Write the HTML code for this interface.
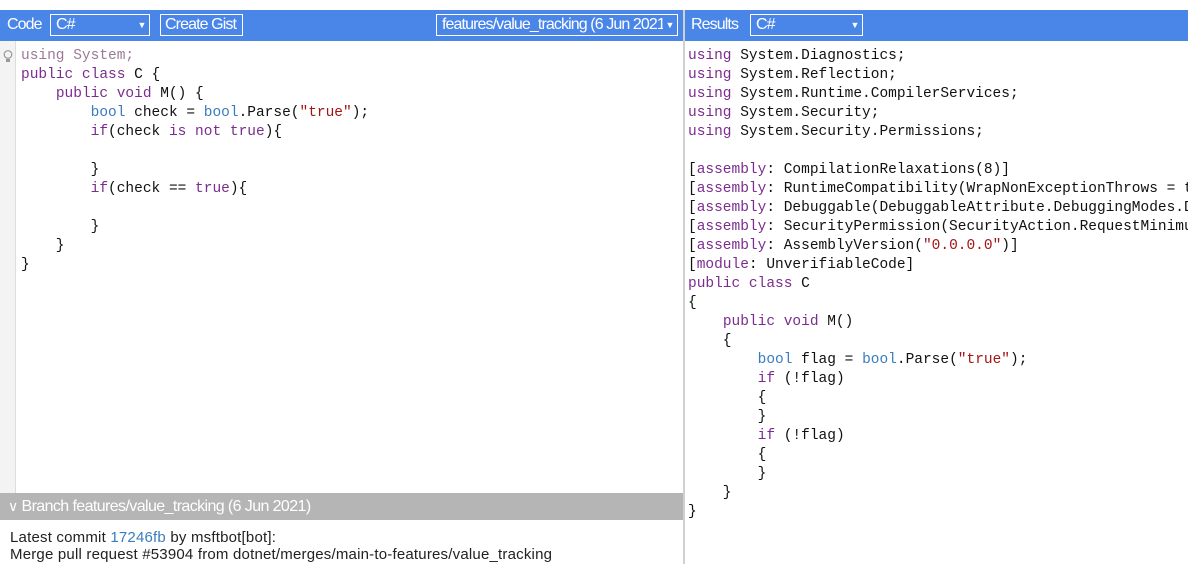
<!DOCTYPE html>
<html><head><meta charset="utf-8"><style>
*{margin:0;padding:0;box-sizing:border-box}
body{width:1188px;height:564px;overflow:hidden;background:#fff;font-family:"Liberation Sans",sans-serif;position:relative}
.bar{position:absolute;top:10px;height:31px;background:#4a86e8;color:#fff}
.lbl{position:absolute;top:6px;font-size:16px;letter-spacing:-0.9px}
.box{position:absolute;top:4px;height:22px;border:1px solid #fff;color:#fff;font-size:16px;padding:0 5px;line-height:20px;letter-spacing:-0.9px;white-space:nowrap;overflow:hidden}
.arr{position:absolute;right:0;top:0;font-size:9px;width:14px;text-align:center;background:#4a86e8;letter-spacing:0}
.clip{position:absolute;overflow:hidden}
pre{position:absolute;font-family:"Liberation Mono",monospace;font-size:14.5px;line-height:19px;color:#111}
.k{color:#7b2d8e}.t{color:#3a7cc0}.s{color:#a31515}.g{color:#9a7a9a}
</style></head><body>
<div class="bar" style="left:0;width:683px">
<div class="lbl" style="left:7px">Code</div>
<div class="box" style="left:50px;width:100px">C#<span class="arr">▼</span></div>
<div class="box" style="left:160px;width:83px;padding:0 4px">Create Gist</div>
<div class="box" style="left:436px;width:242px;padding-right:14px">features/value_tracking (6 Jun 2021)<span class="arr">▼</span></div>
</div>
<div class="bar" style="left:685px;width:503px">
<div class="lbl" style="left:6px">Results</div>
<div class="box" style="left:65px;width:113px">C#<span class="arr">▼</span></div>
</div>
<div style="position:absolute;left:683px;top:10px;width:2px;height:554px;background:#d0d0d0"></div>
<div style="position:absolute;left:0;top:41px;width:16px;height:452px;background:#f3f3f3;border-right:1px solid #ddd"></div>
<svg style="position:absolute;left:3px;top:50px" width="10" height="13" viewBox="0 0 10 13"><circle cx="5" cy="4.5" r="3.8" fill="none" stroke="#999" stroke-width="1.2"/><rect x="3" y="9" width="4" height="3" fill="#999"/></svg>
<pre style="left:21px;top:47px"><span class="g">using System;</span>
<span class="k">public class</span> C {
    <span class="k">public void</span> M() {
        <span class="t">bool</span> check = <span class="t">bool</span>.Parse(<span class="s">"true"</span>);
        <span class="k">if</span>(check <span class="k">is not</span> <span class="k">true</span>){
            
        }
        <span class="k">if</span>(check == <span class="k">true</span>){
            
        }
    }
}</pre>
<div class="clip" style="left:685px;top:41px;width:503px;height:523px">
<pre style="left:3px;top:6px"><span class="k">using</span> System.Diagnostics;
<span class="k">using</span> System.Reflection;
<span class="k">using</span> System.Runtime.CompilerServices;
<span class="k">using</span> System.Security;
<span class="k">using</span> System.Security.Permissions;

[<span class="k">assembly</span>: CompilationRelaxations(8)]
[<span class="k">assembly</span>: RuntimeCompatibility(WrapNonExceptionThrows = true)]
[<span class="k">assembly</span>: Debuggable(DebuggableAttribute.DebuggingModes.Default)]
[<span class="k">assembly</span>: SecurityPermission(SecurityAction.RequestMinimum)]
[<span class="k">assembly</span>: AssemblyVersion(<span class="s">"0.0.0.0"</span>)]
[<span class="k">module</span>: UnverifiableCode]
<span class="k">public class</span> C
{
    <span class="k">public void</span> M()
    {
        <span class="t">bool</span> flag = <span class="t">bool</span>.Parse(<span class="s">"true"</span>);
        <span class="k">if</span> (!flag)
        {
        }
        <span class="k">if</span> (!flag)
        {
        }
    }
}</pre>
</div>
<div style="position:absolute;left:0;top:493px;width:683px;height:27px;background:#b5b5b5;color:#fff;font-size:16px;line-height:27px;padding-left:8px;letter-spacing:-0.6px"><span style="font-size:14px">∨</span> Branch features/value_tracking (6 Jun 2021)</div>
<div style="position:absolute;left:10px;top:529px;font-size:15px;line-height:17px;color:#222;letter-spacing:0.2px;white-space:nowrap">Latest commit <span style="color:#3a7cc0">17246fb</span> by msftbot[bot]:<br>Merge pull request #53904 from dotnet/merges/main-to-features/value_tracking</div>
</body></html>
